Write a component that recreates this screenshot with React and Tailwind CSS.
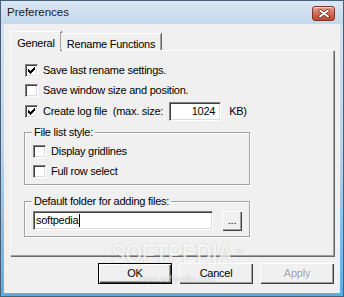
import React from 'react';

function CheckMark() {
  const cols = [2, 3, 4, 3, 2, 1, 0];
  return (
    <svg width="7" height="7" viewBox="0 0 7 7" shapeRendering="crispEdges">
      {cols.map((y, x) => (
        <rect key={x} x={x} y={y} width="1" height="3" fill="#000" />
      ))}
    </svg>
  );
}

function CheckBox({ checked, label }) {
  return (
    <div className="flex items-center h-full">
      <div className="w-[13px] h-[13px] bg-white border border-t-[#808080] border-l-[#808080] border-b-white border-r-white shadow-[inset_1px_1px_0_#404040,inset_-1px_-1px_0_#dcdcdc] flex items-center justify-center">
        {checked && <CheckMark />}
      </div>
      <span className="ml-[5px] whitespace-pre">{label}</span>
    </div>
  );
}

function Button({ children, isDefault, disabled }) {
  return (
    <div
      className={`w-[74px] h-[21px] flex items-center justify-center bg-[#f0f0f0] ${
        isDefault
          ? 'border border-black shadow-[inset_1px_1px_0_#fff,inset_-1px_-1px_0_#404040,inset_-2px_-2px_0_#a0a0a0]'
          : 'shadow-[inset_1px_1px_0_#fff,inset_-1px_-1px_0_#404040,inset_-2px_-2px_0_#a0a0a0]'
      } ${disabled ? 'text-[#a0a0a0] [text-shadow:1px_1px_0_#fff]' : 'text-black'}`}
    >
      {children}
    </div>
  );
}

function Group({ title, className, children }) {
  return (
    <div className={`relative w-[226px] border border-[#a0a0a0] shadow-[1px_1px_0_#fff,inset_1px_1px_0_#fff] ${className}`}>
      <span className="absolute -top-[8px] left-[7px] px-[2px] bg-[#f0f0f0] leading-[14px]">{title}</span>
      {children}
    </div>
  );
}

export default function App() {
  return (
    <div className="relative w-[344px] h-[297px] border border-[#4a5f78] bg-gradient-to-b from-[#d7e4f3] via-[#bcd4ee] to-[#58ade6] flex flex-col font-['Liberation_Sans',Arial,sans-serif] text-[11px] tracking-[-0.25px] text-black overflow-hidden">
      {/* title bar */}
      <div className="h-[23px] flex items-center justify-between pl-[6px] pr-[8px] bg-gradient-to-b from-[#dbe7f4] to-[#c3d7ec]">
        <span className="text-[11.5px] tracking-normal text-[#1b1b1b]">Preferences</span>
        <div className="w-[23px] h-[15px] mt-[1px] rounded-[3px] border border-[#7e3426] bg-gradient-to-b from-[#e9a693] via-[#d46c55] to-[#c2432c] flex items-center justify-center shadow-[inset_0_1px_0_rgba(255,255,255,0.5)]">
          <svg width="12" height="9" viewBox="0 0 12 9">
            <path d="M2 1.5 L10 7.5 M10 1.5 L2 7.5" stroke="#5a2218" strokeWidth="3.4" strokeLinecap="round" />
            <path d="M2 1.5 L10 7.5 M10 1.5 L2 7.5" stroke="#fff" strokeWidth="2" strokeLinecap="round" />
          </svg>
        </div>
      </div>

      {/* client area */}
      <div className="flex-1 mx-[3px] mb-[3px] bg-[#f0f0f0] px-[6px] pt-[7px] flex flex-col">
        {/* tabs */}
        <div className="h-[19px] flex items-end relative z-10">
          <div className="w-[51px] h-[20px] -mb-[1px] bg-[#f0f0f0] border-t border-l border-white shadow-[1px_0_0_#696969,inset_-1px_0_0_#a0a0a0] rounded-tl-[2px] flex items-start justify-center pt-[3px]">
            General
          </div>
          <div className="w-[100px] h-[17px] bg-[#f0f0f0] border-t border-white shadow-[1px_0_0_#696969,inset_-1px_0_0_#a0a0a0] flex items-start justify-center pt-[2px]">
            Rename Functions
          </div>
        </div>

        {/* panel */}
        <div className="h-[206px] w-[324px] border-t border-l border-white border-r border-b border-r-[#a0a0a0] border-b-[#a0a0a0] shadow-[1px_1px_0_#696969] px-[13px] pt-[9px] flex flex-col">
          <div className="h-[20px] pl-[1px]">
            <CheckBox checked label="Save last rename settings." />
          </div>
          <div className="h-[21px] pl-[1px]">
            <CheckBox label="Save window size and position." />
          </div>
          <div className="h-[20px] pl-[1px] flex items-center">
            <CheckBox checked label="Create log file  (max. size:" />
            <div className="ml-[6px] w-[52px] h-[19px] bg-white border border-t-[#808080] border-l-[#808080] border-b-white border-r-white shadow-[inset_1px_1px_0_#404040,inset_-1px_-1px_0_#dcdcdc] flex items-center justify-end pr-[5px]">
              1024
            </div>
            <span className="ml-[8px]">KB)</span>
          </div>

          <Group title="File list style:" className="mt-[11px] h-[53px] pl-[8px] pt-[8px]">
            <div className="h-[20px]">
              <CheckBox label="Display gridlines" />
            </div>
            <div className="h-[20px]">
              <CheckBox label="Full row select" />
            </div>
          </Group>

          <Group title="Default folder for adding files:" className="mt-[16px] h-[36px] pl-[8px] pt-[9px]">
            <div className="flex items-start">
              <div className="w-[180px] h-[19px] bg-white border border-t-[#808080] border-l-[#808080] border-b-white border-r-white shadow-[inset_1px_1px_0_#404040,inset_-1px_-1px_0_#dcdcdc] flex items-center pl-[2px]">
                softpedia<span className="w-[1px] h-[13px] bg-black ml-[1px]" />
              </div>
              <div className="ml-[9px] w-[20px] h-[20px] bg-[#f0f0f0] shadow-[inset_1px_1px_0_#fff,inset_-1px_-1px_0_#404040,inset_-2px_-2px_0_#a0a0a0] flex items-center justify-center pb-[2px]">
                ...
              </div>
            </div>
          </Group>
        </div>

        {/* buttons */}
        <div className="mt-[7px] flex justify-end gap-[7px]">
          <Button isDefault>OK</Button>
          <Button>Cancel</Button>
          <Button disabled>Apply</Button>
        </div>
      </div>

      {/* watermark */}
      <div className="absolute left-[110px] top-[240px] pointer-events-none flex flex-col items-center opacity-70">
        <div className="flex items-start">
          <span className="font-bold text-[22px] tracking-[-0.5px] leading-[26px] text-[#f6f6f6] scale-y-[1.25] [text-shadow:0_0_1px_rgba(0,0,0,0.35)]">SOFTPEDIA</span>
          <span className="text-[6px] text-[#d0d0d0] ml-[2px] mt-[6px]">TM</span>
        </div>
        <span className="mt-[6px] text-[9px] tracking-normal text-[#f4f4f4] [text-shadow:0_0_1px_rgba(0,0,0,0.35)]">www.softpedia.com</span>
      </div>
    </div>
  );
}
